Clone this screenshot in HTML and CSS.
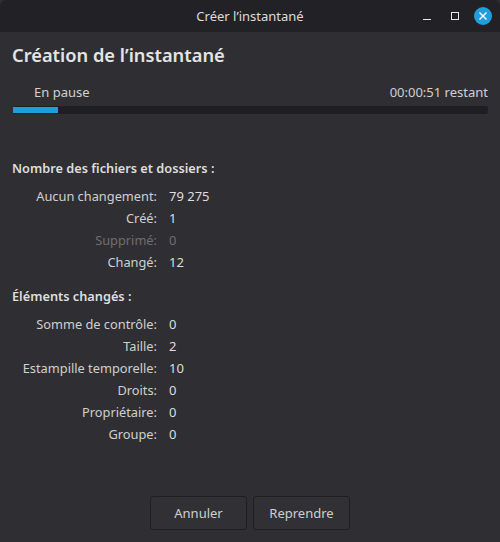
FILE: index.html
```html
<!DOCTYPE html>
<html lang="fr">
<head>
<meta charset="UTF-8">
<title>Créer l’instantané</title>
<link rel="stylesheet" href="styles.css">
</head>
<body>

<div class="window">
    <div class="titlebar">
        <span class="title">Créer l’instantané</span>
        <div class="controls">
            <svg width="12" height="12" viewBox="0 0 12 12"><path d="M2 9.5h8" stroke="#e8e8e8" stroke-width="1" fill="none"/></svg>
            <svg width="12" height="12" viewBox="0 0 12 12"><rect x="2.5" y="2.5" width="7" height="7" stroke="#e8e8e8" stroke-width="1" fill="none"/></svg>
            <svg class="close" width="18" height="18" viewBox="0 0 18 18"><circle cx="9" cy="9" r="9" fill="#1f9ede"/><path d="M5.5 5.5l7 7M12.5 5.5l-7 7" stroke="#fff" stroke-width="1.4" fill="none"/></svg>
        </div>
    </div>

    <div class="content">
        <h1>Création de l’instantané</h1>

        <div class="status">
            <span>En pause</span>
            <span>00:00:51 restant</span>
        </div>
        <div class="progress"><div class="progress-fill" style="width: 9.5%"></div></div>

        <h2 class="first">Nombre des fichiers et dossiers :</h2>
        <div class="stats">
            <span class="key">Aucun changement:</span><span class="val">79 275</span>
            <span class="key">Créé:</span><span class="val">1</span>
            <span class="key off">Supprimé:</span><span class="val off">0</span>
            <span class="key">Changé:</span><span class="val">12</span>
        </div>

        <h2>Éléments changés :</h2>
        <div class="stats">
            <span class="key">Somme de contrôle:</span><span class="val">0</span>
            <span class="key">Taille:</span><span class="val">2</span>
            <span class="key">Estampille temporelle:</span><span class="val">10</span>
            <span class="key">Droits:</span><span class="val">0</span>
            <span class="key">Propriétaire:</span><span class="val">0</span>
            <span class="key">Groupe:</span><span class="val">0</span>
        </div>

        <div class="buttons">
            <button>Annuler</button>
            <button>Reprendre</button>
        </div>
    </div>
</div>

</body>
</html>
```

FILE: styles.css
```css
html, body {
    margin: 0;
    height: 100%;
    background: #2f2f33;
}
body {
    font-family: "Noto Sans", sans-serif;
    font-size: 13px;
    color: #d6d6d6;
    overflow: hidden;
}
.window {
    width: 500px;
    height: 542px;
    display: flex;
    flex-direction: column;
    background: #2f2f33;
}
.titlebar {
    height: 32px;
    flex: none;
    display: flex;
    align-items: center;
    justify-content: center;
    background: #222226;
    color: #dcdcdc;
    border-radius: 6px 6px 0 0;
    position: relative;
}
.controls {
    position: absolute;
    right: 8px;
    top: 7px;
    display: flex;
    align-items: center;
    gap: 16px;
}
.close { margin-left: -3px; }
.content {
    flex: 1;
    display: flex;
    flex-direction: column;
    padding: 0 12px 12px;
}
h1 {
    font-size: 18.3px;
    line-height: 24px;
    font-weight: 600;
    color: #e4e4e4;
    margin: 11px 0 0;
}
.status {
    display: flex;
    justify-content: space-between;
    line-height: 18px;
    margin-top: 16px;
    padding-left: 22px;
    color: #d0d0d0;
}
.progress {
    height: 8px;
    margin: 5px 0 0 1px;
    background: #1f1f23;
    border-radius: 2px;
}
.progress-fill {
    height: 6px;
    position: relative;
    top: 1px;
    background: #1f9ede;
}
h2 {
    font-size: 12.75px;
    line-height: 18px;
    font-weight: 600;
    color: #dedede;
    margin: 14px 0 0;
}
h2.first { margin-top: 45px; }
.stats {
    display: grid;
    grid-template-columns: 145px 1fr;
    column-gap: 12px;
    grid-auto-rows: 22px;
    align-items: center;
    margin-top: 8px;
}
.key { text-align: right; color: #cfcfcf; white-space: nowrap; font-size: 12.8px; }
.val { color: #dedede; }
.off { color: #6e6e70; }
.buttons {
    margin-top: auto;
    display: flex;
    justify-content: center;
    gap: 6px;
}
button {
    width: 97px;
    height: 34px;
    font: inherit;
    color: #cfcfcf;
    background: #313135;
    border: 1px solid #1f1f23;
    border-radius: 3px;
}
```
